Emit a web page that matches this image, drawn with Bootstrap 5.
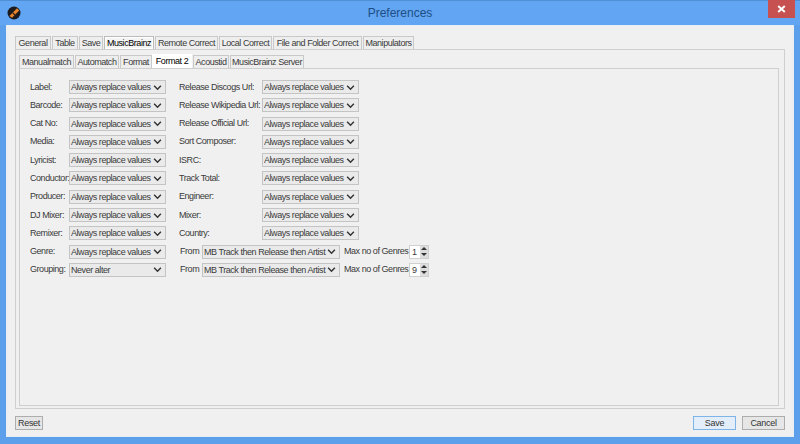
<!DOCTYPE html>
<html lang="en"><head><meta charset="utf-8"><title>Preferences</title>
<link href="https://cdn.jsdelivr.net/npm/bootstrap@5.3.0/dist/css/bootstrap.min.css" rel="stylesheet">
<style>
html,body{height:444px;overflow:hidden}
body{background:#5c9fea;font-family:"Liberation Sans",sans-serif;font-size:9px;letter-spacing:-.45px;color:#3a3a3a;width:800px;line-height:1}
.wintitle{height:25px;background:#62a5f2;border-top:1px solid #4f8fd8;position:relative}
.wintitle .ttl{font-size:12px;letter-spacing:0;color:#1d4e86;line-height:24px}
.appicon{position:absolute;left:7px;top:5px}
.closebtn{position:absolute;left:768px;top:-1px;width:27px;height:18px;background:#c75050}
.client{margin:0 6px;height:412px;background:#f0f0f0;padding:10px 8px 8px 8px;border:1px solid #e9eef4}
.tabrow{height:13px;border:0;flex-wrap:nowrap;padding:0;margin:0}
.tabrow .nav-link{height:13px;padding:0;border:1px solid #c9c9c9;border-bottom:0;border-radius:0;color:#3a3a3a;background:#eeeeee;font-size:9px;display:flex;align-items:center;justify-content:center;margin:0 1px 0 0;white-space:nowrap}
.tabs1 .nav-item:nth-child(1) .nav-link{width:36px}
.tabs1 .nav-item:nth-child(2) .nav-link{width:26px}
.tabs1 .nav-item:nth-child(3) .nav-link{width:24px}
.tabs1 .nav-item:nth-child(4) .nav-link{width:50px;box-shadow:inset 0 0 0 1px #fff;border-color:#bbb;background:#f4f4f4}
.tabs1 .nav-item:nth-child(5) .nav-link{width:63px}
.tabs1 .nav-item:nth-child(6) .nav-link{width:53px}
.tabs1 .nav-item:nth-child(7) .nav-link{width:89px}
.tabs1 .nav-item:nth-child(8) .nav-link{width:51px}
.tabs2 .nav-item:nth-child(1) .nav-link{width:55px}
.tabs2 .nav-item:nth-child(2) .nav-link{width:44px}
.tabs2 .nav-item:nth-child(3) .nav-link{width:32px;margin-right:0}
.tabs2 .nav-item:nth-child(4) .nav-link{width:40px;background:#fff;border-color:#fff;height:14px;margin-top:-1px}
.tabs2 .nav-item:nth-child(5) .nav-link{width:36px}
.tabs2 .nav-item:nth-child(6) .nav-link{width:74px}
.outerpane{height:360px;border:1px solid #cfcfcf;padding:5px 5px 3px 3px}
.innerpane{height:338px;border:1px solid #cfcfcf;padding:11px 0 0 10px}
.formgrid{display:flex;flex-direction:column;gap:4.3px}
.frow{height:14px;display:flex;align-items:center}
.lblone{width:39px;flex:none;white-space:nowrap}
.lbltwo{width:83px;flex:none;white-space:nowrap;margin-left:13px}
.lblfrom{width:22px;flex:none;margin-left:14px}
.form-select.combo{width:97px;flex:none;height:14px;min-height:0;padding:0 0 0 1px;font-size:9px;line-height:12px;letter-spacing:-.45px;border:1px solid #c4c4c4;border-radius:0;color:#3a3a3a;background-color:#eaeaea;background-image:url("data:image/svg+xml,%3csvg xmlns='http://www.w3.org/2000/svg' viewBox='0 0 16 16'%3e%3cpath fill='none' stroke='%23333' stroke-width='2.6' d='M2 5l6 6 6-6'/%3e%3c/svg%3e");background-size:9px 9px;background-position:right 3px center;box-shadow:none}
.form-select.combowide{width:138px}
.maxlbl{margin-left:4px;width:65px;flex:none;white-space:nowrap}
.spin{width:20px;height:14px;flex:none;display:flex;border:1px solid #d0d0d0;background:#fff}
.spinval{flex:1;line-height:12px;padding-left:2px}
.spinbtns{width:8px;display:flex;flex-direction:column;background:#ddd}
.spinbtns span{flex:1;display:flex;align-items:center;justify-content:center}
.tri-up,.tri-dn{width:0;height:0;border-left:3px solid transparent;border-right:3px solid transparent}
.tri-up{border-bottom:3px solid #333}
.tri-dn{border-top:3px solid #333}
.footbar{margin-top:7px}
.btnset{gap:6px}
.btn.wbtn{height:14px;padding:0;font-size:9px;letter-spacing:-.3px;line-height:12px;border:1px solid #adadad;border-radius:0;background:#e6e6e6;color:#333;width:43px}
.btn.wbtn.wsmall{width:28px}
.btn.wbtn.wdef{background:#e3eefa;border-color:#7fb4e8}
</style></head>
<body>
<div class="wintitle text-center">
  <svg class="appicon" width="14" height="14" viewBox="0 0 14 14"><circle cx="7" cy="7" r="6.5" fill="#1b1b1f"/><path d="M2.5 10 10 2.2l2.2 2.2L5 11.8z" fill="#e8842a"/><path d="M5.8 6.8l2 2" stroke="#1b1b1f" stroke-width="1.2"/></svg>
  <div class="ttl">Preferences</div>
  <div class="closebtn d-flex align-items-center justify-content-center"><svg width="9" height="8" viewBox="0 0 9 8"><path d="M1.2 1l6.6 6M7.8 1L1.2 7" stroke="#fff" stroke-width="2"/></svg></div>
</div>
<div class="client">
  <ul class="nav nav-tabs tabrow tabs1">
    <li class="nav-item"><a class="nav-link" href="#">General</a></li>
    <li class="nav-item"><a class="nav-link" href="#">Table</a></li>
    <li class="nav-item"><a class="nav-link" href="#">Save</a></li>
    <li class="nav-item"><a class="nav-link active" href="#">MusicBrainz</a></li>
    <li class="nav-item"><a class="nav-link" href="#">Remote Correct</a></li>
    <li class="nav-item"><a class="nav-link" href="#">Local Correct</a></li>
    <li class="nav-item"><a class="nav-link" href="#">File and Folder Correct</a></li>
    <li class="nav-item"><a class="nav-link" href="#">Manipulators</a></li>
  </ul>
  <div class="outerpane">
    <ul class="nav nav-tabs tabrow tabs2">
      <li class="nav-item"><a class="nav-link" href="#">Manualmatch</a></li>
      <li class="nav-item"><a class="nav-link" href="#">Automatch</a></li>
      <li class="nav-item"><a class="nav-link" href="#">Format</a></li>
      <li class="nav-item"><a class="nav-link active" href="#">Format 2</a></li>
      <li class="nav-item"><a class="nav-link" href="#">Acoustid</a></li>
      <li class="nav-item"><a class="nav-link" href="#">MusicBrainz Server</a></li>
    </ul>
    <div class="innerpane">
      <div class="formgrid">
        <div class="frow"><span class="lblone">Label:</span><select class="form-select combo"><option>Always replace values</option></select><span class="lbltwo">Release Discogs Url:</span><select class="form-select combo"><option>Always replace values</option></select></div>
        <div class="frow"><span class="lblone">Barcode:</span><select class="form-select combo"><option>Always replace values</option></select><span class="lbltwo">Release Wikipedia Url:</span><select class="form-select combo"><option>Always replace values</option></select></div>
        <div class="frow"><span class="lblone">Cat No:</span><select class="form-select combo"><option>Always replace values</option></select><span class="lbltwo">Release Official Url:</span><select class="form-select combo"><option>Always replace values</option></select></div>
        <div class="frow"><span class="lblone">Media:</span><select class="form-select combo"><option>Always replace values</option></select><span class="lbltwo">Sort Composer:</span><select class="form-select combo"><option>Always replace values</option></select></div>
        <div class="frow"><span class="lblone">Lyricist:</span><select class="form-select combo"><option>Always replace values</option></select><span class="lbltwo">ISRC:</span><select class="form-select combo"><option>Always replace values</option></select></div>
        <div class="frow"><span class="lblone">Conductor:</span><select class="form-select combo"><option>Always replace values</option></select><span class="lbltwo">Track Total:</span><select class="form-select combo"><option>Always replace values</option></select></div>
        <div class="frow"><span class="lblone">Producer:</span><select class="form-select combo"><option>Always replace values</option></select><span class="lbltwo">Engineer:</span><select class="form-select combo"><option>Always replace values</option></select></div>
        <div class="frow"><span class="lblone">DJ Mixer:</span><select class="form-select combo"><option>Always replace values</option></select><span class="lbltwo">Mixer:</span><select class="form-select combo"><option>Always replace values</option></select></div>
        <div class="frow"><span class="lblone">Remixer:</span><select class="form-select combo"><option>Always replace values</option></select><span class="lbltwo">Country:</span><select class="form-select combo"><option>Always replace values</option></select></div>
        <div class="frow"><span class="lblone">Genre:</span><select class="form-select combo"><option>Always replace values</option></select><span class="lblfrom">From</span><select class="form-select combo combowide"><option>MB Track then Release then Artist</option></select><span class="maxlbl">Max no of Genres</span><div class="spin"><span class="spinval">1</span><div class="spinbtns"><span><i class="tri-up"></i></span><span><i class="tri-dn"></i></span></div></div></div>
        <div class="frow"><span class="lblone">Grouping:</span><select class="form-select combo"><option>Never alter</option></select><span class="lblfrom">From</span><select class="form-select combo combowide"><option>MB Track then Release then Artist</option></select><span class="maxlbl">Max no of Genres</span><div class="spin"><span class="spinval">9</span><div class="spinbtns"><span><i class="tri-up"></i></span><span><i class="tri-dn"></i></span></div></div></div>
      </div>
    </div>
  </div>
  <div class="footbar d-flex justify-content-between">
    <button type="button" class="btn wbtn wsmall">Reset</button>
    <div class="d-flex btnset"><button type="button" class="btn wbtn wdef">Save</button><button type="button" class="btn wbtn">Cancel</button></div>
  </div>
</div>
</body></html>
